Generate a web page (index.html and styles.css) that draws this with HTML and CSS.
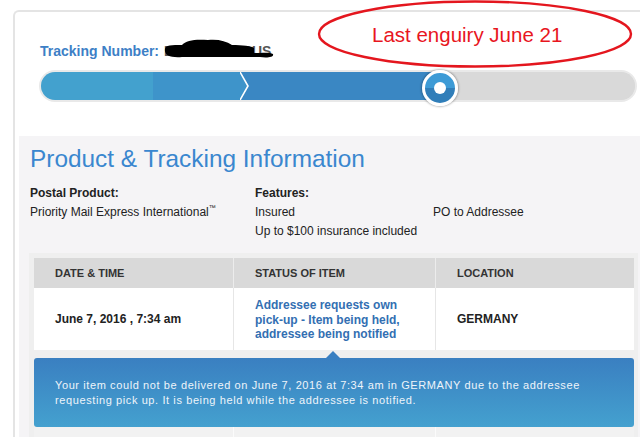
FILE: index.html
```html
<!DOCTYPE html>
<html>
<head>
<meta charset="utf-8">
<title>Tracking</title>
<link rel="stylesheet" href="styles.css">
</head>
<body>
<div class="page">
  <div class="card">
    <div class="tracking">
      <span class="tn-label">Tracking Number:</span>
      <span class="tn-value">EL000000000US<svg class="redact" viewBox="0 0 112 22" width="112" height="22"><path d="M3 12 C3 8 10 8 20 8 C24 3 34 2 46 3 C56 2 64 4 70 8 C80 8 90 9 92 11 L92 16 C100 16 108 15 111 17 C112 20 106 21 98 20 L20 20 C8 21 2 18 3 12 Z" fill="#000"/></svg></span>
    </div>
    <div class="progress">
      <div class="track">
        <div class="seg s1"></div>
        <div class="seg s2"></div>
        <div class="seg s3"><svg class="chev" viewBox="0 0 10 28" width="10" height="28"><polygon points="0,0 8,14 0,28" fill="#3e94ca"/><polyline points="0,0 8,14 0,28" fill="none" stroke="#fff" stroke-width="1.6"/></svg></div>
        <div class="seg rest"></div>
      </div>
      <div class="knob"><span class="dot"></span></div>
    </div>
    <div class="panel">
      <h1 class="title">Product &amp; Tracking Information</h1>
      <div class="info">
        <div class="prod">
          <b>Postal Product:</b>
          <span>Priority Mail Express International<sup>™</sup></span>
        </div>
        <div class="feat">
          <b>Features:</b>
          <div class="feat-grid">
            <span>Insured</span>
            <span>PO to Addressee</span>
            <span class="nowrap">Up to $100 insurance included</span>
          </div>
        </div>
      </div>
      <div class="table">
        <div class="thead">
          <div class="cell">DATE &amp; TIME</div>
          <div class="cell">STATUS OF ITEM</div>
          <div class="cell">LOCATION</div>
        </div>
        <div class="row">
          <div class="cell">June 7, 2016 , 7:34 am</div>
          <div class="cell status">Addressee requests own pick-up - Item being held, addressee being notified</div>
          <div class="cell">GERMANY</div>
        </div>
        <div class="detail">Your item could not be delivered on June 7, 2016 at 7:34 am in GERMANY due to the addressee requesting pick up. It is being held while the addressee is notified.</div>
        <div class="row next">
          <div class="cell"></div>
          <div class="cell"></div>
          <div class="cell"></div>
        </div>
      </div>
    </div>
  </div>
  <div class="note">
    <svg class="ring" viewBox="0 0 320 70" width="320" height="70"><ellipse cx="159" cy="34" rx="156" ry="32.5" fill="none" stroke="#e4161e" stroke-width="2.4"/></svg>
    <span class="note-text">Last enguiry June 21</span>
  </div>
</div>
</body>
</html>
```

FILE: styles.css
```css
html, body {
  margin: 0;
  background: #fff;
  font-family: "Liberation Sans", Arial, sans-serif;
}

.page {
  position: relative;
  height: 437px;
  overflow: hidden;
  padding: 10px 0 0 13px;
  box-sizing: border-box;
}

.card {
  border-top: 2px solid #e4e4e4;
  border-left: 2px solid #e4e4e4;
  border-top-left-radius: 6px;
  padding-top: 31px;
  height: 100%;
  box-sizing: border-box;
}

.tracking {
  padding-left: 25px;
  font-size: 14px;
  line-height: 16px;
  font-weight: bold;
  color: #3d7fc6;
}

.tn-value {
  position: relative;
  color: #555;
  margin-left: 1px;
}

.redact {
  position: absolute;
  left: -2px;
  top: -6px;
}

.progress {
  position: relative;
  margin: 11px 3px 0 24px;
  border: 2px solid #e9e9e9;
  border-radius: 17px;
}

.track {
  display: flex;
  height: 28px;
  border-radius: 15px;
  overflow: hidden;
  background: #d9d9d9;
}

.seg { height: 100%; }
.s1 { width: 112px; background: #43a1ce; }
.s2 { width: 87px; background: #3e94ca; }
.s3 { width: 200px; background: #3a87c3; position: relative; }
.rest { flex: 1; background: #d9d9d9; }

.chev {
  position: absolute;
  left: 0;
  top: 0;
}

.knob {
  position: absolute;
  left: 381px;
  top: -2px;
  width: 36px;
  height: 36px;
  box-sizing: border-box;
  border: 3px solid #fff;
  border-radius: 50%;
  background: linear-gradient(#3d9bd6 50%, #307eb9 50%);
  box-shadow: 0 0 2px 1px rgba(0, 0, 0, 0.25);
  display: flex;
  align-items: center;
  justify-content: center;
}

.dot {
  width: 12px;
  height: 12px;
  border-radius: 50%;
  background: #fff;
}

.panel {
  margin: 34px 0 0 4px;
  background: #f5f4f6;
  padding: 9px 2px 0 11px;
  height: 310px;
}

.title {
  margin: 0;
  font-size: 24.4px;
  line-height: 28px;
  font-weight: normal;
  color: #3a87cf;
}

.info {
  display: flex;
  margin-top: 11px;
  font-size: 12px;
  line-height: 19px;
  color: #222;
}

.info b {
  display: block;
  font-weight: bold;
}

.prod { width: 225px; }

.prod sup {
  font-size: 7px;
  line-height: 0;
  vertical-align: 6px;
}

.feat-grid {
  display: grid;
  grid-template-columns: 178px auto;
}

.nowrap { white-space: nowrap; }

.table {
  margin: 12px 0 0 -1px;
  background: #efefef;
  padding: 5px 4px 0 5px;
}

.thead, .row {
  display: grid;
  grid-template-columns: 199px 202px 1fr;
}

.thead {
  height: 30px;
  background: #d9d9d9;
  font-size: 11px;
  font-weight: bold;
  color: #333;
}

.cell {
  display: flex;
  align-items: center;
  padding-left: 21px;
}

.cell + .cell { border-left: 1px solid #ececec; }

.row {
  height: 62px;
  background: #fff;
  font-size: 12px;
  line-height: 14.5px;
  font-weight: bold;
  color: #222;
}

.row .cell + .cell { border-left-color: #e6e6e6; }

.status {
  color: #336fb2;
  padding-right: 20px;
  padding-top: 2px;
}

.detail {
  position: relative;
  margin-top: 8px;
  height: 69px;
  box-sizing: border-box;
  padding: 20px 21px 0;
  border-radius: 3px;
  background: linear-gradient(#3a7fc1, #44a1cf);
  font-size: 11px;
  line-height: 15px;
  letter-spacing: 0.6px;
  color: #eef4fa;
}

.detail::before {
  content: "";
  position: absolute;
  left: 292px;
  top: -7px;
  border-left: 7px solid transparent;
  border-right: 7px solid transparent;
  border-bottom: 7px solid #3a7fc1;
}

.row.next {
  height: 20px;
  background: #f2f2f2;
}

.row.next .cell + .cell { border-left: 1px solid #fbfbfb; }

.note {
  position: absolute;
  left: 316px;
  top: 0;
  width: 320px;
  height: 70px;
}

.ring {
  position: absolute;
  left: 0;
  top: 0;
}

.note-text {
  position: absolute;
  left: 56px;
  top: 23px;
  font-size: 20.5px;
  line-height: 24px;
  color: #e8161e;
  white-space: nowrap;
}
```
